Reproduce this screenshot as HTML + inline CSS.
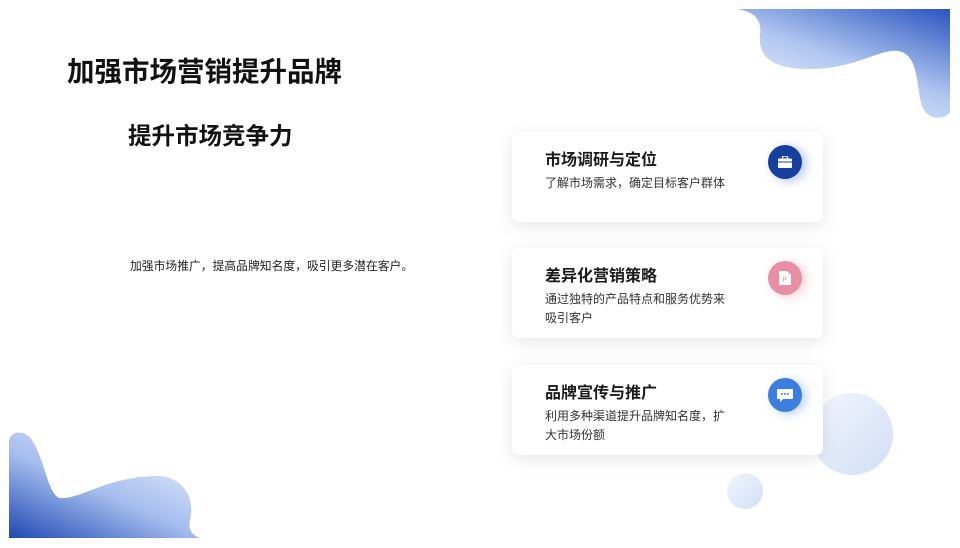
<!DOCTYPE html>
<html><head><meta charset="utf-8"><style>
*{margin:0;padding:0;box-sizing:border-box}
body{width:960px;height:548px;overflow:hidden;background:#fff;position:relative;font-family:"Liberation Sans","Noto Sans CJK SC",sans-serif;color:#111}
.abs{position:absolute}
.card{position:absolute;left:512px;width:311px;height:90px;background:#fff;border-radius:7px;box-shadow:0 4px 18px rgba(0,0,0,0.1)}
.card h3{position:absolute;left:33px;top:14px;font-size:16px;font-weight:bold;color:#1a1a1a}
.card p{position:absolute;left:33px;top:42px;width:185px;font-size:12px;line-height:19px;color:#333}
.ic{position:absolute;left:256px;top:13px;width:34px;height:34px;border-radius:50%;display:flex;align-items:center;justify-content:center}
</style></head><body>
<svg class="abs" style="left:0;top:0" width="960" height="548">
<defs>
<linearGradient id="g1" x1="1" y1="0" x2="0.3" y2="1"><stop offset="0" stop-color="#2a55c0"/><stop offset="0.55" stop-color="#b0c6f0"/><stop offset="1" stop-color="#eef3fd"/></linearGradient>
<linearGradient id="g2" x1="0" y1="1" x2="0.8" y2="0"><stop offset="0" stop-color="#1f48b3"/><stop offset="0.5" stop-color="#a5bdee"/><stop offset="1" stop-color="#eaf0fc"/></linearGradient>
<linearGradient id="g3" x1="0" y1="0" x2="1" y2="1"><stop offset="0" stop-color="#f3f6fd"/><stop offset="1" stop-color="#d0def6"/></linearGradient>
</defs>
<path d="M737 9 L950 9 L950 112 C945 120 930 120 924 110 C915 95 922 55 898 51 C880 48 855 70 805 69 C770 68 758 55 760 35 C762 20 755 12 737 9Z" fill="url(#g1)"/>
<path d="M9 538 L9 440 C12 430 25 430 32 440 C45 460 48 495 60 498 C80 500 110 475 160 476 C185 478 195 500 190 520 C188 530 192 535 200 538Z" fill="url(#g2)"/>
<circle cx="852" cy="434" r="41" fill="url(#g3)"/>
<circle cx="745" cy="491" r="18" fill="url(#g3)"/>
</svg>
<div class="abs" style="left:67px;top:49px;font-size:27.5px;font-weight:bold">加强市场营销提升品牌</div>
<div class="abs" style="left:128px;top:117px;font-size:23.5px;font-weight:bold">提升市场竞争力</div>
<div class="abs" style="left:130px;top:257px;font-size:11.8px;color:#222">加强市场推广，提高品牌知名度，吸引更多潜在客户。</div>

<div class="card" style="top:132px"><h3>市场调研与定位</h3><p>了解市场需求，确定目标客户群体</p>
<div class="ic" style="background:#163f9e;box-shadow:4px 2px 10px rgba(40,80,200,0.35)"><svg width="14" height="12" viewBox="0 0 14 12"><rect x="0" y="2.5" width="14" height="9.5" rx="1" fill="#fff"/><rect x="4.5" y="0" width="5" height="3" fill="none" stroke="#fff" stroke-width="1.3"/><rect x="0" y="5.5" width="14" height="1" fill="#163f9e"/></svg></div></div>

<div class="card" style="top:248px"><h3>差异化营销策略</h3><p>通过独特的产品特点和服务优势来吸引客户</p>
<div class="ic" style="background:#e88fa5;box-shadow:4px 2px 10px rgba(230,120,150,0.35)"><svg width="12" height="14" viewBox="0 0 12 14"><path d="M0 0H8L12 4V14H0Z" fill="#fff"/><text x="3.5" y="11" font-size="7" fill="#e88fa5" font-family="Liberation Sans">P</text></svg></div></div>

<div class="card" style="top:365px"><h3>品牌宣传与推广</h3><p>利用多种渠道提升品牌知名度，扩大市场份额</p>
<div class="ic" style="background:#3a7fe0;box-shadow:4px 2px 10px rgba(60,120,230,0.35)"><svg width="16" height="13" viewBox="0 0 16 13"><path d="M1 0H15Q16 0 16 1V9Q16 10 15 10H6L3 13V10H1Q0 10 0 9V1Q0 0 1 0Z" fill="#fff"/><circle cx="5" cy="5" r="1" fill="#3a7fe0"/><circle cx="8" cy="5" r="1" fill="#3a7fe0"/><circle cx="11" cy="5" r="1" fill="#3a7fe0"/></svg></div></div>
</body></html>
